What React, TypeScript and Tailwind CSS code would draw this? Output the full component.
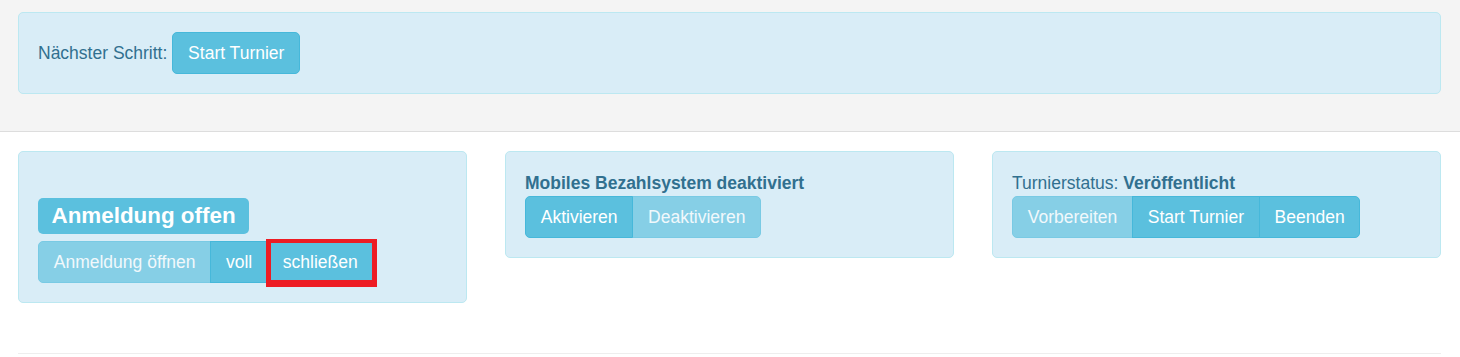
import React from 'react';

type BtnProps = {
  children: React.ReactNode;
  disabled?: boolean;
  first?: boolean;
  last?: boolean;
  marked?: boolean;
};

function Btn({ children, disabled, first = true, last = true, marked }: BtnProps) {
  return (
    <span className={'relative inline-flex ' + (first ? '' : '-ml-px')}>
      <button
        type="button"
        className={
          'border border-[#46b8da] bg-[#5bc0de] px-[14.75px] py-[7.5px] leading-[25px] text-white whitespace-nowrap ' +
          (first ? 'rounded-l-[5px] ' : '') +
          (last ? 'rounded-r-[5px] ' : '') +
          (disabled ? 'opacity-65' : '')
        }
      >
        {children}
      </button>
      {marked ? (
        <span className="pointer-events-none absolute -left-px -top-[2px] -right-[4px] -bottom-[4px] border-t-4 border-l-[5px] border-r-[5px] border-b-[7px] border-[#ed1c24]" />
      ) : null}
    </span>
  );
}

function Panel({ children }: { children: React.ReactNode }) {
  return (
    <div className="rounded-[5px] border border-[#bce8f1] bg-[#d9edf7] p-[19px]">{children}</div>
  );
}

export default function App() {
  return (
    <div className="font-['Liberation_Sans',Arial,sans-serif] text-[17.5px] leading-[25px] text-[#31708f]">
      <div className="border-b border-[#ddd] bg-[#f4f4f4] pt-[12px] pb-[37px] pl-[18px] pr-[19px]">
        <div className="flex items-center rounded-[5px] border border-[#bce8f1] bg-[#d9edf7] p-[19px]">
          <span>Nächster Schritt:</span>
          <span className="ml-[5px] flex">
            <Btn>Start Turnier</Btn>
          </span>
        </div>
      </div>

      <div className="grid grid-cols-3 items-start gap-[38px] pt-[19px] pl-[18px] pr-[19px]">
        <Panel>
          <div className="mt-[27px] flex">
            <span className="h-[36px] rounded-[5px] bg-[#5bc0de] px-[13.5px] text-[22.4px] font-bold leading-[36px] text-white">
              Anmeldung offen
            </span>
          </div>
          <div className="mt-[7px] flex">
            <Btn disabled last={false}>
              Anmeldung öffnen
            </Btn>
            <Btn first={false} last={false}>
              voll
            </Btn>
            <Btn first={false} marked>
              schließen
            </Btn>
          </div>
        </Panel>

        <Panel>
          <div className="font-bold">Mobiles Bezahlsystem deaktiviert</div>
          <div className="flex">
            <Btn last={false}>Aktivieren</Btn>
            <Btn first={false} disabled>
              Deaktivieren
            </Btn>
          </div>
        </Panel>

        <Panel>
          <div>
            Turnierstatus: <b className="font-bold">Veröffentlicht</b>
          </div>
          <div className="flex">
            <Btn disabled last={false}>
              Vorbereiten
            </Btn>
            <Btn first={false} last={false}>
              Start Turnier
            </Btn>
            <Btn first={false}>Beenden</Btn>
          </div>
        </Panel>
      </div>

      <div className="mt-[50px] ml-[18px] mr-[19px] border-t border-[#eee]" />
    </div>
  );
}
